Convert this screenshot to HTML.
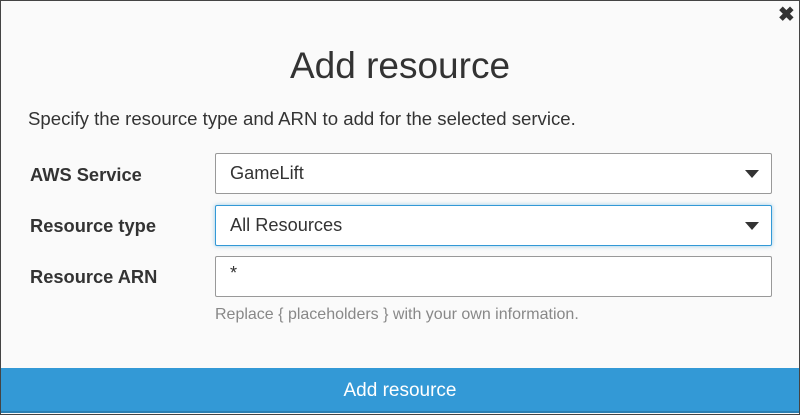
<!DOCTYPE html>
<html><head><style>
body{margin:0;width:800px;height:415px;overflow:hidden;font-family:"Liberation Sans",Arial,sans-serif;}
.f{position:absolute;left:0;top:0;width:798px;height:413px;border:1px solid #444;background:#fafafa;}
.x{position:absolute;left:778px;top:2px;font-size:20px;font-weight:bold;color:#333;}
h1{position:absolute;left:0;width:800px;top:45px;margin:0;text-align:center;font-weight:normal;font-size:37px;color:#333;}
.d{position:absolute;left:28px;top:108px;font-size:18.6px;color:#333;}
.l{position:absolute;left:30px;font-size:18.3px;font-weight:bold;color:#333;}
.i{position:absolute;left:215px;width:557px;height:41px;border:1px solid #999;border-radius:2px;background:#fff;box-sizing:border-box;font-size:18.2px;color:#333;padding-left:14px;line-height:39px;}
.i.s{border-color:#3399d6;box-shadow:0 0 4px rgba(51,153,214,.5);}
.c{position:absolute;right:12px;top:16px;width:0;height:0;border-left:7px solid transparent;border-right:7px solid transparent;border-top:8px solid #333;}
.h{position:absolute;left:215px;top:306px;font-size:16px;color:#888;}
.b{position:absolute;left:1px;top:368px;width:798px;height:45px;background:#3399d6;color:#fff;font-size:19px;text-align:center;line-height:45px;border-bottom:2px solid #2b80b3;box-sizing:border-box;}
</style></head><body>
<div class="f"></div>
<div class="x">✖</div>
<h1>Add resource</h1>
<div class="d">Specify the resource type and ARN to add for the selected service.</div>
<div class="l" style="top:164px">AWS Service</div>
<div class="l" style="top:215px">Resource type</div>
<div class="l" style="top:266px">Resource ARN</div>
<div class="i" style="top:153px">GameLift<div class="c"></div></div>
<div class="i s" style="top:205px">All Resources<div class="c"></div></div>
<div class="i" style="top:256px;line-height:32px">*</div>
<div class="h">Replace { placeholders } with your own information.</div>
<div class="b">Add resource</div>
</body></html>
